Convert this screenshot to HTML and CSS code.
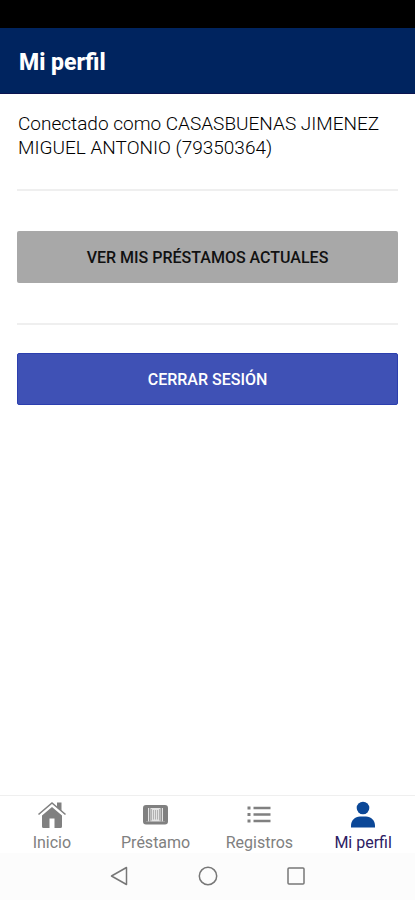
FILE: index.html
```html
<!DOCTYPE html>
<html lang="es">
<head>
  <meta charset="UTF-8">
  <title>Mi perfil</title>
  <meta name="viewport" content="width=device-width, initial-scale=1.0">
  <link rel="stylesheet" href="styles.css">
</head>
<body>

  <div class="status-bar"></div>

  <header class="header">
    <h1>Mi perfil</h1>
  </header>

  <main class="content">
    <p class="user">Conectado como CASASBUENAS JIMENEZ MIGUEL ANTONIO (79350364)</p>
    <hr>
    <button type="button" class="btn loans-btn">VER MIS PRÉSTAMOS ACTUALES</button>
    <hr>
    <button type="button" class="btn logout-btn">CERRAR SESIÓN</button>
  </main>

  <nav class="tabs">
    <a class="tab" href="#inicio">
      <svg width="30" height="28" viewBox="0 0 30 28" fill="currentColor">
        <path d="M15 6 5 14.500V25.500Q5 27 6.500 27H12.500V17.500H17.500V27H23.500Q25 27 25 25.500V14.500Z"/>
        <path d="M1.500 13.500 15 2 28.500 13.500" fill="none" stroke="currentColor" stroke-width="1.600"/>
        <path d="M20 1.500H24.500V10L20 6.200Z"/>
      </svg>
      <span>Inicio</span>
    </a>
    <a class="tab" href="#prestamo">
      <svg width="30" height="28" viewBox="0 0 30 28" fill="currentColor">
        <rect x="3.500" y="5.500" width="22" height="16.500" rx="1.500" fill="#e4e4e4" stroke="currentColor" stroke-width="3"/>
        <path d="M4.500 7H7V20.500H4.500ZM22 7H24.500V20.500H22ZM8.200 7H9.400V20.500H8.200ZM19.600 7H20.800V20.500H19.600Z"/>
        <path d="M10.500 8V19.500M12.500 9V18.500M14.500 9V18.500M16.500 9V18.500M18.500 8V19.500" stroke="currentColor" stroke-width="0.700" opacity="0.7"/>
      </svg>
      <span>Préstamo</span>
    </a>
    <a class="tab" href="#registros">
      <svg width="30" height="28" viewBox="0 0 30 28" fill="currentColor">
        <path d="M3.500 5.500H6.500V8.500H3.500ZM3.500 12H6.500V15H3.500ZM3.500 18.500H6.500V21.500H3.500ZM9.500 5.700H26.500V8.300H9.500ZM9.500 12.200H26.500V14.800H9.500ZM9.500 18.700H26.500V21.300H9.500Z"/>
      </svg>
      <span>Registros</span>
    </a>
    <a class="tab active" href="#perfil">
      <svg width="30" height="28" viewBox="0 0 30 28" fill="currentColor">
        <circle cx="15" cy="7" r="6.300"/>
        <path d="M3 26.500V24.500C3 19.500 7 15.500 12 15.500H18C23 15.500 27 19.500 27 24.500V26.500Z"/>
      </svg>
      <span>Mi perfil</span>
    </a>
  </nav>

  <div class="system-nav">
    <button type="button" aria-label="Atrás">
      <svg width="20" height="20" viewBox="0 0 20 20"><path d="M16.500 1.500V18.500L1.500 10Z"/></svg>
    </button>
    <button type="button" aria-label="Pantalla principal">
      <svg width="20" height="20" viewBox="0 0 20 20"><circle cx="10" cy="10" r="8.700"/></svg>
    </button>
    <button type="button" aria-label="Recientes">
      <svg width="20" height="20" viewBox="0 0 20 20"><rect x="2" y="2" width="16" height="16" rx="1"/></svg>
    </button>
  </div>

</body>
</html>
```

FILE: styles.css
```css
* {
  box-sizing: border-box;
}
body {
  display: flex;
  flex-direction: column;
  min-height: 100vh;
  margin: 0;
  background: #fff;
  color: #222;
  font-family: Roboto, "Liberation Sans", sans-serif;
}
.status-bar {
  height: 28px;
  background: #000;
}
.header {
  padding: 23px 19px 18px;
  background: #00245f;
  border-bottom: 1px solid #0b1450;
  color: #fff;
}
.header h1 {
  margin: 0;
  font-size: 23px;
  line-height: 24px;
  font-weight: 800;
}

/* Profile */
.content {
  flex: 1;
  padding: 18px 17px;
}
.user {
  margin: 0 0 29px;
  padding-left: 1px;
  color: #000;
  font-size: 19px;
  line-height: 24px;
  font-weight: 300;
}
hr {
  height: 2px;
  margin: 0;
  border: none;
  background: #efefef;
}
.btn {
  display: block;
  width: 100%;
  height: 52px;
  border: none;
  border-radius: 2px;
  font-family: inherit;
  font-size: 16px;
  font-weight: 500;
  cursor: pointer;
}
.loans-btn {
  margin: 40px 0;
  background: #a8a8a8;
  color: #111;
}
.logout-btn {
  margin-top: 28px;
  background: #3f51b5;
  border: 1px solid #2c3fae;
  color: #fff;
}

/* Bottom tabs */
.tabs {
  display: flex;
  padding-top: 5px;
  border-top: 1px solid #efefef;
}
.tab {
  flex: 1;
  display: flex;
  flex-direction: column;
  align-items: center;
  gap: 4px;
  color: #808080;
  font-size: 16px;
  line-height: 20px;
  text-decoration: none;
}
.tab.active {
  color: #0b4797;
}
.tab.active span {
  color: #2d2063;
}

/* Android buttons */
.system-nav {
  display: flex;
  justify-content: center;
  gap: 68px;
  padding: 13px 0 14px;
  background: #fcfcfc;
}
.system-nav button {
  display: flex;
  padding: 0;
  border: none;
  background: none;
  cursor: pointer;
}
.system-nav svg {
  fill: none;
  stroke: #777;
  stroke-width: 1.5;
  stroke-linejoin: round;
}
```
